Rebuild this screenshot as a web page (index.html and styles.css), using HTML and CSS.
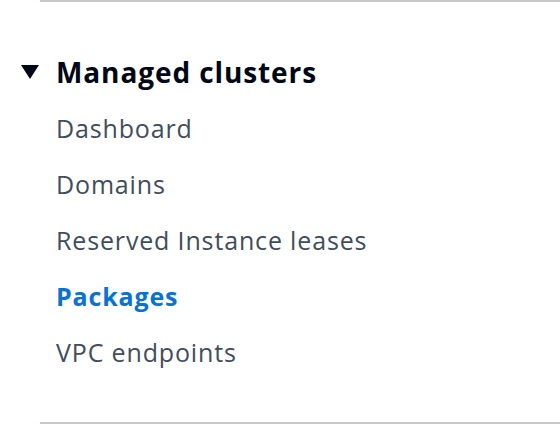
FILE: index.html
```html
<!DOCTYPE html>
<html lang="en">

<head>
    <meta charset="utf-8">
    <title>Managed clusters</title>
    <link rel="stylesheet" href="styles.css">
</head>

<body>
    <nav class="sidenav">
        <hr class="divider">

        <section class="group">
            <div class="group-header">
                <span class="caret"></span>
                <span class="group-title">Managed clusters</span>
            </div>
            <ul class="links">
                <li><a href="#">Dashboard</a></li>
                <li><a href="#">Domains</a></li>
                <li><a href="#">Reserved Instance leases</a></li>
                <li><a href="#" class="active">Packages</a></li>
                <li><a href="#">VPC endpoints</a></li>
            </ul>
        </section>

        <hr class="divider">
    </nav>
</body>

</html>
```

FILE: styles.css
```css
/* base */
body {
    margin: 0;
    background: #fff;
    font-family: "Open Sans", "Noto Sans", sans-serif;
    color: #414d5c;
}

.divider {
    border: none;
    height: 2px;
    margin: 0 0 0 40px;
    background: #c6c6cd;
}

/* group */
.group {
    padding: 42px 0;
}

.group-header {
    display: flex;
    align-items: center;
    height: 56px;
    color: #000716;
}

.caret {
    width: 0;
    height: 0;
    margin: 0 17px 0 21px;
    border-left: 9.5px solid transparent;
    border-right: 9.5px solid transparent;
    border-top: 14px solid #000716;
}

.group-title {
    font-size: 28px;
    font-weight: 700;
    letter-spacing: 0.9px;
}

.links {
    list-style: none;
    margin: 0;
    padding: 0 0 0 56px;
}

.links li {
    line-height: 56px;
    font-size: 25px;
    letter-spacing: 0.85px;
}

.links a {
    color: #414d5c;
    text-decoration: none;
}

.links a.active {
    color: #0972d3;
    font-weight: 700;
}
```
